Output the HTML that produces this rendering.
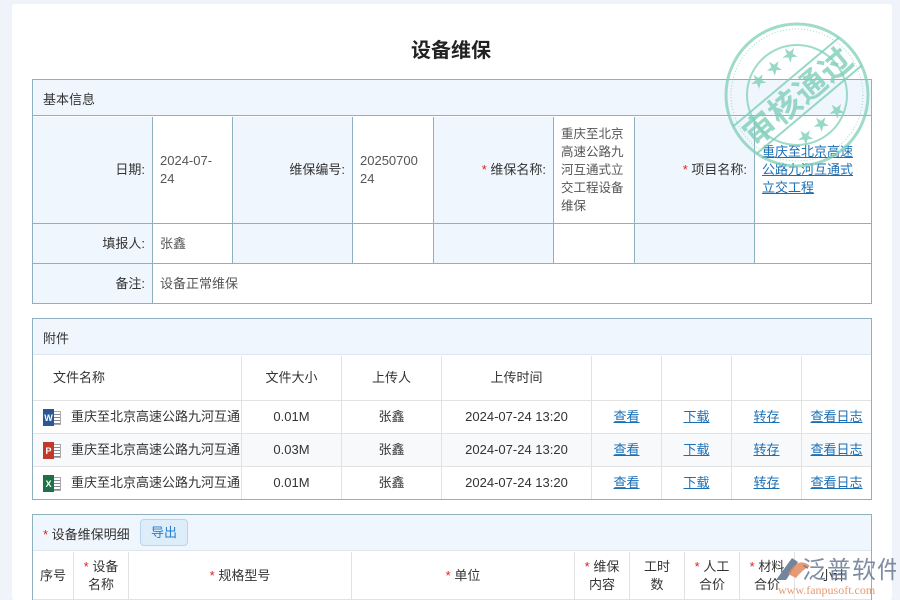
<!DOCTYPE html>
<html><head><meta charset="utf-8"><style>
*{margin:0;padding:0;box-sizing:border-box}
html,body{width:900px;height:600px;overflow:hidden}
body{background:#f0f4fa;font-family:"Liberation Sans","Noto Sans CJK SC",sans-serif;font-size:13px;color:#333;position:relative}
.card{position:absolute;left:12px;top:4px;width:880px;height:596px;background:#fff;border-radius:3px}
.a{position:absolute}
.title{left:0;width:902px;top:34px;text-align:center;font-size:20px;font-weight:bold;color:#222}
.box{border:1px solid #8fb0c0}
.cell{position:absolute;border-right:1px solid #8fb0c0;border-bottom:1px solid #8fb0c0;display:flex;align-items:center;padding:0 7px;line-height:18px}
.lb{background:#f0f6fd;justify-content:flex-end;color:#333}
.v{color:#555}
.r{color:#e02020}
.lk{color:#1a6fb5;text-decoration:underline}
.c2{position:absolute;border-right:1px solid #e2e2e2;border-bottom:1px solid #e2e2e2;display:flex;align-items:center;justify-content:center;text-align:center;line-height:18px}
.ic{width:18px;height:20px;position:relative;margin-right:10px;flex:none}
.ic b{position:absolute;left:0;top:2px;width:11px;height:17px;color:#fff;font-size:9px;font-weight:bold;display:flex;align-items:center;justify-content:center}
.ic i{position:absolute;left:9px;top:4px;width:9px;height:14px;border:1px solid #aaa;background:repeating-linear-gradient(#fff 0 2px,#889 2px 3px)}
</style></head><body>
<div class="card"></div>
<div class="a title">设备维保</div>

<div class="a box" style="left:32px;top:79px;width:840px;height:225px;background:#fff"></div>
<div class="a" style="left:33px;top:80px;width:838px;height:36px;background:#f0f6fd;border-bottom:1px solid #8fb0c0;padding:9px 10px;font-size:13px">基本信息</div>
<div class="cell lb" style="left:33px;top:117px;width:120px;height:107px">日期:</div>
<div class="cell v" style="left:153px;top:117px;width:80px;height:107px">2024-07-<br>24</div>
<div class="cell lb" style="left:233px;top:117px;width:120px;height:107px">维保编号:</div>
<div class="cell v" style="left:353px;top:117px;width:81px;height:107px">20250700<br>24</div>
<div class="cell lb" style="left:434px;top:117px;width:120px;height:107px"><span class="r">*&nbsp;</span>维保名称:</div>
<div class="cell v" style="left:554px;top:117px;width:81px;height:107px;font-size:12.5px">重庆至北京高速公路九河互通式立交工程设备维保</div>
<div class="cell lb" style="left:635px;top:117px;width:120px;height:107px"><span class="r">*&nbsp;</span>项目名称:</div>
<div class="cell lk" style="left:755px;top:117px;width:116px;height:107px;border-right:none">重庆至北京高速公路九河互通式立交工程</div>
<div class="cell lb" style="left:33px;top:224px;width:120px;height:40px">填报人:</div>
<div class="cell v" style="left:153px;top:224px;width:80px;height:40px">张鑫</div>
<div class="cell lb" style="left:233px;top:224px;width:120px;height:40px"></div>
<div class="cell" style="left:353px;top:224px;width:81px;height:40px"></div>
<div class="cell lb" style="left:434px;top:224px;width:120px;height:40px"></div>
<div class="cell" style="left:554px;top:224px;width:81px;height:40px"></div>
<div class="cell lb" style="left:635px;top:224px;width:120px;height:40px"></div>
<div class="cell" style="left:755px;top:224px;width:116px;height:40px;border-right:none"></div>
<div class="cell lb" style="left:33px;top:264px;width:120px;height:39px;border-bottom:none">备注:</div>
<div class="cell v" style="left:153px;top:264px;width:718px;height:39px;border:none">设备正常维保</div>

<svg class="a" style="left:720px;top:20px" width="160" height="150" viewBox="0 0 160 150">
<g fill="none" stroke="#7fcfb8" opacity="0.75">
<circle cx="77" cy="75" r="71" stroke-width="3"/>
<circle cx="77" cy="75" r="66" stroke-width="1" stroke-dasharray="1 2"/>
<circle cx="77" cy="75" r="50" stroke-width="2"/>
</g>
<g transform="rotate(-40 77 75)" opacity="0.8">
<line x1="8" y1="58" x2="146" y2="58" stroke="#7fcfb8" stroke-width="2"/>
<line x1="8" y1="94" x2="146" y2="94" stroke="#7fcfb8" stroke-width="2"/>
<text x="77" y="88" text-anchor="middle" font-family="Noto Sans CJK SC,sans-serif" font-weight="bold" font-size="32" fill="#7fcfb8" letter-spacing="1">审核通过</text>
<text x="77" y="45" text-anchor="middle" font-size="16" fill="#7fcfb8">★ ★ ★</text>
<text x="77" y="118" text-anchor="middle" font-size="16" fill="#7fcfb8">★ ★ ★</text>
</g>
</svg>

<div class="a box" style="left:32px;top:318px;width:840px;height:182px;background:#fff"></div>
<div class="a" style="left:33px;top:319px;width:838px;height:36px;background:#f0f6fd;border-bottom:1px solid #dde6ee;padding:9px 10px">附件</div>
<div class="c2" style="left:33px;top:356px;width:209px;height:45px;justify-content:flex-start;padding-left:20px">文件名称</div>
<div class="c2" style="left:242px;top:356px;width:100px;height:45px">文件大小</div>
<div class="c2" style="left:342px;top:356px;width:100px;height:45px">上传人</div>
<div class="c2" style="left:442px;top:356px;width:150px;height:45px">上传时间</div>
<div class="c2" style="left:592px;top:356px;width:70px;height:45px"></div>
<div class="c2" style="left:662px;top:356px;width:70px;height:45px"></div>
<div class="c2" style="left:732px;top:356px;width:70px;height:45px"></div>
<div class="c2" style="left:802px;top:356px;width:69px;height:45px;border-right:none"></div>

<div class="a" style="left:33px;top:434px;width:838px;height:33px;background:#f8f9fb"></div>
<div class="c2" style="left:33px;top:401px;width:209px;height:33px;justify-content:flex-start;padding-left:10px"><span class="ic"><i></i><b style="background:#2b5797">W</b></span>重庆至北京高速公路九河互通</div>
<div class="c2" style="left:242px;top:401px;width:100px;height:33px">0.01M</div>
<div class="c2" style="left:342px;top:401px;width:100px;height:33px">张鑫</div>
<div class="c2" style="left:442px;top:401px;width:150px;height:33px">2024-07-24 13:20</div>
<div class="c2 lk" style="left:592px;top:401px;width:70px;height:33px">查看</div>
<div class="c2 lk" style="left:662px;top:401px;width:70px;height:33px">下载</div>
<div class="c2 lk" style="left:732px;top:401px;width:70px;height:33px">转存</div>
<div class="c2 lk" style="left:802px;top:401px;width:69px;height:33px;border-right:none">查看日志</div>

<div class="c2" style="left:33px;top:434px;width:209px;height:33px;justify-content:flex-start;padding-left:10px"><span class="ic"><i></i><b style="background:#c0392b">P</b></span>重庆至北京高速公路九河互通</div>
<div class="c2" style="left:242px;top:434px;width:100px;height:33px">0.03M</div>
<div class="c2" style="left:342px;top:434px;width:100px;height:33px">张鑫</div>
<div class="c2" style="left:442px;top:434px;width:150px;height:33px">2024-07-24 13:20</div>
<div class="c2 lk" style="left:592px;top:434px;width:70px;height:33px">查看</div>
<div class="c2 lk" style="left:662px;top:434px;width:70px;height:33px">下载</div>
<div class="c2 lk" style="left:732px;top:434px;width:70px;height:33px">转存</div>
<div class="c2 lk" style="left:802px;top:434px;width:69px;height:33px;border-right:none">查看日志</div>

<div class="c2" style="left:33px;top:467px;width:209px;height:32px;border-bottom:none;justify-content:flex-start;padding-left:10px"><span class="ic"><i></i><b style="background:#1e7145">X</b></span>重庆至北京高速公路九河互通</div>
<div class="c2" style="left:242px;top:467px;width:100px;height:32px;border-bottom:none">0.01M</div>
<div class="c2" style="left:342px;top:467px;width:100px;height:32px;border-bottom:none">张鑫</div>
<div class="c2" style="left:442px;top:467px;width:150px;height:32px;border-bottom:none">2024-07-24 13:20</div>
<div class="c2 lk" style="left:592px;top:467px;width:70px;height:32px;border-bottom:none">查看</div>
<div class="c2 lk" style="left:662px;top:467px;width:70px;height:32px;border-bottom:none">下载</div>
<div class="c2 lk" style="left:732px;top:467px;width:70px;height:32px;border-bottom:none">转存</div>
<div class="c2 lk" style="left:802px;top:467px;width:69px;height:32px;border:none">查看日志</div>

<div class="a box" style="left:32px;top:514px;width:840px;height:90px;background:#fff"></div>
<div class="a" style="left:33px;top:515px;width:838px;height:36px;background:#f0f6fd;border-bottom:1px solid #dde6ee;padding:9px 10px"><span class="r">* </span>设备维保明细</div>
<div class="a" style="left:140px;top:519px;width:48px;height:27px;border:1px solid #b8d4ec;background:#ddeefa;border-radius:4px;color:#2a7cc7;text-align:center;line-height:25px">导出</div>
<div class="c2" style="left:33px;top:552px;width:41px;height:48px">序号</div>
<div class="c2" style="left:74px;top:552px;width:55px;height:48px"><span><span class="r">* </span>设备<br>名称</span></div>
<div class="c2" style="left:129px;top:552px;width:223px;height:48px"><span><span class="r">* </span>规格型号</span></div>
<div class="c2" style="left:352px;top:552px;width:223px;height:48px"><span><span class="r">* </span>单位</span></div>
<div class="c2" style="left:575px;top:552px;width:55px;height:48px"><span><span class="r">* </span>维保<br>内容</span></div>
<div class="c2" style="left:630px;top:552px;width:55px;height:48px">工时<br>数</div>
<div class="c2" style="left:685px;top:552px;width:55px;height:48px"><span><span class="r">* </span>人工<br>合价</span></div>
<div class="c2" style="left:740px;top:552px;width:55px;height:48px"><span><span class="r">* </span>材料<br>合价</span></div>
<div class="c2" style="left:795px;top:552px;width:76px;height:48px;border-right:none">小计</div>

<svg class="a" style="left:772px;top:552px" width="124" height="46" viewBox="0 0 124 46">
<path d="M4 28 L20 6 L26 10 L14 28 Z" fill="#5a6e8c" opacity="0.85"/>
<path d="M16 22 Q26 4 38 14 Q30 18 24 26 Z" fill="#e08a5a" opacity="0.85"/>
<text x="30" y="26" font-family="Noto Sans CJK SC,sans-serif" font-size="24" fill="#6a7a94" opacity="0.85" letter-spacing="1">泛普软件</text>
<text x="6" y="42" font-family="Liberation Serif,serif" font-size="12" fill="#e08a5a" opacity="0.85">www.fanpusoft.com</text>
</svg>
</body></html>
